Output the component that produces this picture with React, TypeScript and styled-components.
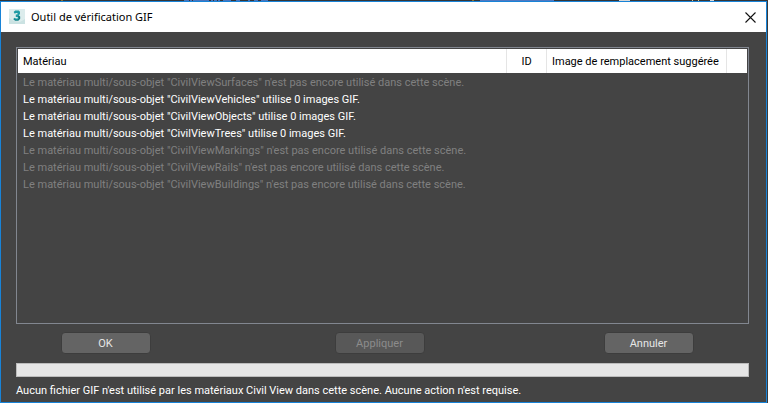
import React from 'react';
import styled, { createGlobalStyle } from 'styled-components';

const GlobalStyle = createGlobalStyle`
  *, *::before, *::after { box-sizing: border-box; }
  body { margin: 0; background: #2b2b2b; }
`;

const Screen = styled.div`
  display: flex;
  flex-direction: column;
  min-height: 100vh;
  padding-right: 1px;
  background: #3a3a3a;
  font-family: Roboto, 'Liberation Sans', sans-serif;
  font-size: 11px;
  line-height: 17px;
`;

const Backdrop = styled.svg`
  display: block;
  width: 100%;
  height: 1px;
`;

const Dialog = styled.section`
  flex: 1;
  display: flex;
  flex-direction: column;
  border: 1px solid #1883d7;
  background: #444444;
`;

const TitleBar = styled.header`
  display: flex;
  align-items: center;
  height: 30px;
  padding: 0 8px;
  background: #ffffff;
`;

const AppIcon = styled.svg`
  width: 16px;
  height: 16px;
`;

const Title = styled.h1`
  flex: 1;
  margin: 0 0 0 6px;
  font: 400 11px/16px 'Noto Sans', 'Open Sans', sans-serif;
  color: #000000;
`;

const CloseButton = styled.button`
  display: flex;
  padding: 2px;
  border: 0;
  background: transparent;
  color: #111111;
`;

const Content = styled.main`
  flex: 1;
  display: flex;
  flex-direction: column;
  padding: 15px 17px 3px 15px;
`;

const ListFrame = styled.div`
  flex: 1;
  padding: 1px;
  border: 1px solid #828790;
`;

const MaterialTable = styled.table`
  width: 100%;
  table-layout: fixed;
  border-collapse: separate;
  border-spacing: 0;
`;

const HeadCell = styled.th<{ $width?: number; $centered?: boolean; $last?: boolean }>`
  width: ${(p) => (p.$width ? `${p.$width}px` : 'auto')};
  height: 24px;
  padding: 0 5px;
  border-right: ${(p) => (p.$last ? '0' : '1px solid #e5e5e5')};
  background: #ffffff;
  color: #000000;
  font-weight: 400;
  text-align: ${(p) => (p.$centered ? 'center' : 'left')};
  white-space: nowrap;
`;

const Row = styled.tr<{ $used: boolean }>`
  color: ${(p) => (p.$used ? '#ffffff' : '#808080')};
`;

const Cell = styled.td`
  height: 17px;
  padding: 2px 5px 0;
  line-height: 15px;
  white-space: nowrap;
`;

const Actions = styled.div`
  display: grid;
  grid-template-columns: 179fr 369fr 169fr;
  justify-items: center;
  padding: 8px 16px 9px 0;
`;

const ActionButton = styled.button`
  width: 90px;
  height: 22px;
  padding: 0;
  border: 1px solid #3d3d3d;
  border-radius: 4px;
  background: #646464;
  color: #e6e6e6;
  font: inherit;

  &:disabled {
    background: #585858;
    color: #8c8c8c;
  }
`;

const ProgressTrack = styled.div`
  height: 14px;
  border: 1px solid #bcbcbc;
  background: #e6e6e6;
`;

const Status = styled.p`
  margin: 5px 0 0;
  color: #ffffff;
`;

const materials = [
  { name: 'CivilViewSurfaces', used: false },
  { name: 'CivilViewVehicles', used: true },
  { name: 'CivilViewObjects', used: true },
  { name: 'CivilViewTrees', used: true },
  { name: 'CivilViewMarkings', used: false },
  { name: 'CivilViewRails', used: false },
  { name: 'CivilViewBuildings', used: false },
];

const backdropMarks: [number, number, string][] = [
  [61, 2, '#8a7430'],
  [184, 5, '#4a74bc'],
  [190, 2, '#4a74bc'],
  [193, 16, '#4a74bc'],
  [211, 2, '#4a74bc'],
  [214, 3, '#4a74bc'],
  [218, 2, '#4a74bc'],
  [223, 8, '#4a74bc'],
  [236, 4, '#4a74bc'],
  [248, 2, '#4a74bc'],
  [254, 4, '#4a74bc'],
  [261, 7, '#4a74bc'],
  [472, 2, '#8a7430'],
  [480, 74, '#5078c0'],
  [619, 11, '#d8d8d8'],
  [692, 1, '#d8c890'],
  [698, 1, '#d8c890'],
  [710, 4, '#d8d8d8'],
];

export default function App() {
  return (
    <>
      <GlobalStyle />
      <Screen>
        <Backdrop aria-hidden="true">
          <rect width="100%" height="1" fill="#343537" />
          {backdropMarks.map(([x, width, fill]) => (
            <rect key={x} x={x} width={width} height="1" fill={fill} />
          ))}
        </Backdrop>
        <Dialog role="dialog" aria-labelledby="dialog-title">
          <TitleBar>
            <AppIcon viewBox="0 0 16 16" aria-hidden="true">
              <rect width="16" height="15" fill="#dcecec" />
              <path d="M0 15V9l5 3 6 1 5-3v5z" fill="#cbe2e2" />
              <path
                d="M4.6 3 6.2 1.4h3.6l1.2 1.4v2.3L9.9 6.3l1.2 1.1v2.4l-1.7 1.7H6L4.3 10l1.2-1.2 1.4.8h1.5l.7-.8-.8-.9H6.8V5.6h1.4l.6-.8-.7-.8H7l-1.2.8z"
                fill="#1f9ba4"
              />
              <path
                d="m8.8 7 2.3.4v2.4l-1.7 1.7H6L4.3 10l2.3.7h2l1.4-1.2z"
                fill="#0d747b"
              />
            </AppIcon>
            <Title id="dialog-title">Outil de vérification GIF</Title>
            <CloseButton type="button" aria-label="Fermer">
              <svg width="11" height="11" viewBox="0 0 11 11" aria-hidden="true">
                <path d="M.5.5l10 10M10.5.5l-10 10" stroke="currentColor" strokeWidth="1.1" />
              </svg>
            </CloseButton>
          </TitleBar>
          <Content>
            <ListFrame>
              <MaterialTable>
                <thead>
                  <tr>
                    <HeadCell scope="col">Matériau</HeadCell>
                    <HeadCell scope="col" $width={40} $centered>
                      ID
                    </HeadCell>
                    <HeadCell scope="col" $width={180}>
                      Image de remplacement suggérée
                    </HeadCell>
                    <HeadCell as="td" $width={20} $last />
                  </tr>
                </thead>
                <tbody>
                  {materials.map(({ name, used }) => (
                    <Row key={name} $used={used}>
                      <Cell>
                        {`Le matériau multi/sous-objet "${name}" ${
                          used
                            ? 'utilise 0 images GIF.'
                            : "n'est pas encore utilisé dans cette scène."
                        }`}
                      </Cell>
                      <Cell />
                      <Cell />
                      <Cell />
                    </Row>
                  ))}
                </tbody>
              </MaterialTable>
            </ListFrame>
            <Actions>
              <ActionButton type="button">OK</ActionButton>
              <ActionButton type="button" disabled>
                Appliquer
              </ActionButton>
              <ActionButton type="button">Annuler</ActionButton>
            </Actions>
            <ProgressTrack role="progressbar" aria-label="Progression" aria-valuenow={0} />
            <Status>
              Aucun fichier GIF n'est utilisé par les matériaux Civil View dans cette scène. Aucune
              action n'est requise.
            </Status>
          </Content>
        </Dialog>
      </Screen>
    </>
  );
}
